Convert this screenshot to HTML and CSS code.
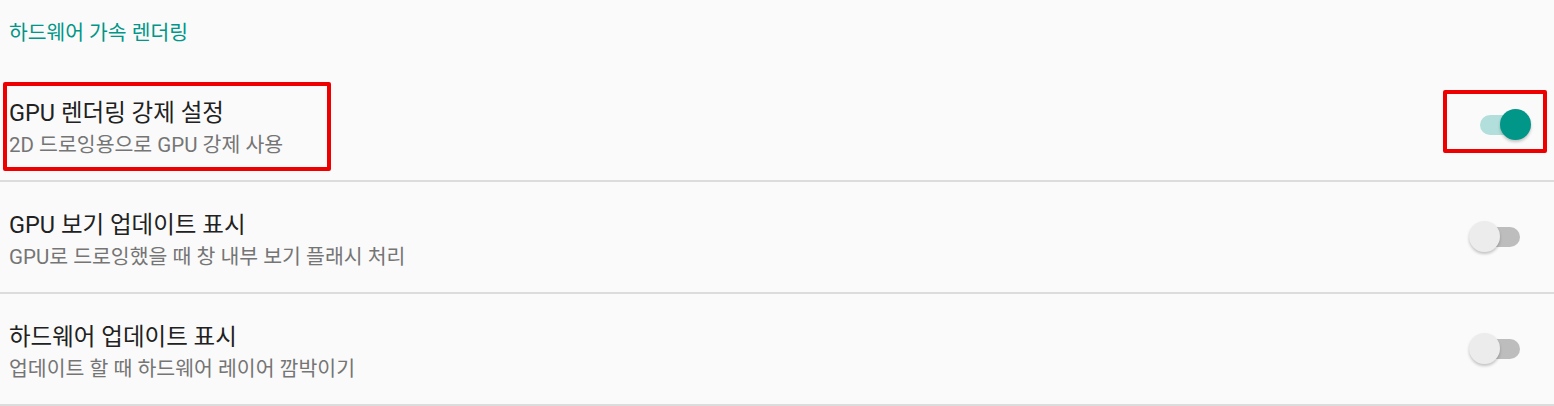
FILE: index.html
```html
<!DOCTYPE html>
<html lang="ko">
<head>
  <meta charset="UTF-8" />
  <meta name="viewport" content="width=device-width, initial-scale=1.0"/>
  <title>하드웨어 가속 렌더링</title>
  <link rel="stylesheet" href="styles.css">
</head>
<body>
  <div class="category">하드웨어 가속 렌더링</div>

  <div class="pref">
    <div class="pref-text">
      <div class="pref-title">GPU 렌더링 강제 설정</div>
      <div class="pref-summary">2D 드로잉용으로 GPU 강제 사용</div>
    </div>
    <div class="switch on"><span class="track"></span><span class="thumb"></span></div>
  </div>

  <div class="pref">
    <div class="pref-text">
      <div class="pref-title">GPU 보기 업데이트 표시</div>
      <div class="pref-summary">GPU로 드로잉했을 때 창 내부 보기 플래시 처리</div>
    </div>
    <div class="switch"><span class="track"></span><span class="thumb"></span></div>
  </div>

  <div class="pref">
    <div class="pref-text">
      <div class="pref-title">하드웨어 업데이트 표시</div>
      <div class="pref-summary">업데이트 할 때 하드웨어 레이어 깜박이기</div>
    </div>
    <div class="switch"><span class="track"></span><span class="thumb"></span></div>
  </div>

  <!-- highlight boxes -->
  <div class="mark mark-text"></div>
  <div class="mark mark-switch"></div>
</body>
</html>
```

FILE: styles.css
```css
* { box-sizing: border-box; margin: 0; padding: 0; }
body {
  font-family: Roboto, "Noto Sans CJK KR", sans-serif;
  background: #fafafa; color: #212121;
  width: 1554px; height: 406px; overflow: hidden; position: relative;
}
.category {
  height: 70px; padding: 20px 0 0 9px;
  font-size: 20.4px; line-height: 26px; color: #009688;
}
.pref {
  height: 112px; display: flex; align-items: center;
  padding: 0 23px 0 9px; border-bottom: 2px solid #dcdcdc;
}
.pref-text { flex: 1; align-self: flex-start; padding-top: 28px; }
.pref-title { font-size: 23.5px; line-height: 30px; color: #212121; }
.pref-summary { font-size: 20.5px; line-height: 26px; margin-top: 4px; color: #757575; }

/* switch */
.switch { position: relative; width: 62px; height: 32px; }
.switch .track {
  position: absolute; left: 11px; top: 6px; width: 40px; height: 20px;
  border-radius: 10px; background: #bdbdbd;
}
.switch .thumb {
  position: absolute; left: 0; top: 0; width: 31px; height: 31px;
  border-radius: 50%; background: #ececec;
  box-shadow: 0 2px 3px rgba(0,0,0,0.22);
}
.switch.on .track { background: #b2dfdb; }
.switch.on .thumb { left: 31px; background: #009688; }

/* red highlight boxes */
.mark { position: absolute; border: 4px solid #ee0000; border-radius: 2px; }
.mark-text { left: 3px; top: 82px; width: 328px; height: 89px; }
.mark-switch { left: 1443px; top: 90px; width: 104px; height: 63px; }
```
